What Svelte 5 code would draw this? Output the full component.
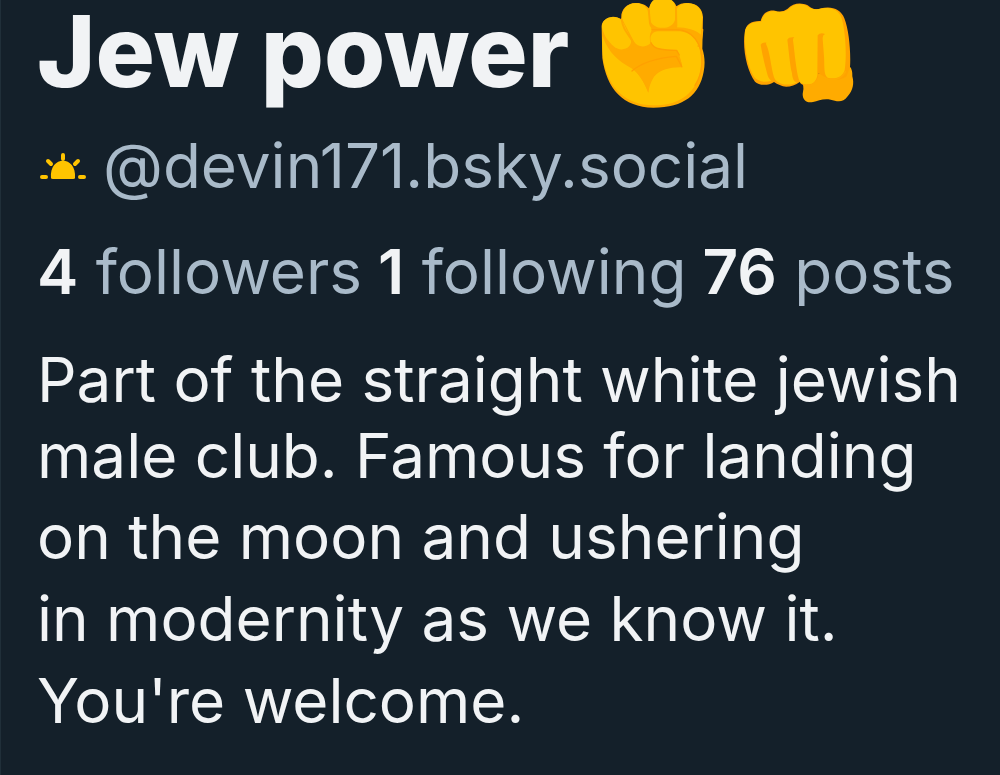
<script>
  const stats = [
    { count: 4, label: 'followers' },
    { count: 1, label: 'following' },
    { count: 76, label: 'posts' }
  ];
  const intro = [
    'Part of the straight white jewish',
    'male club. Famous for landing'
  ];
  const more = [
    'on the moon and ushering',
    'in modernity as we know it.',
    "You're welcome."
  ];
</script>

<main class="profile">
  <h1 class="name">
    <span>Jew power</span>
    <svg class="fist" viewBox="30 0 324 330" role="img" aria-label="Raised fist">
      <path fill="#ffab00" d="M38 84C36 65 50 52 72 50C81 50 90 53 97 58C94 30 112 10 139 9C157 8 171 15 180 25C184 6 199-6 222-6C243-6 258 5 262 19C271 11 284 8 298 9C325 11 341 27 342 51L340 146C347 167 349 190 344 215C332 282 286 323 193 323C102 322 53 267 40 174Z" />
      <path fill="#ffc400" d="M40 108C55 133 70 157 91 175C105 188 119 194 130 204C149 222 165 245 178 278C177 234 211 199 280 202C278 184 270 162 263 152C244 151 224 149 207 145C178 137 176 96 207 94L265 94C307 94 334 124 336 176C340 249 297 306 224 314C120 328 60 271 44 184C39 159 40 132 40 108Z" />
      <rect fill="#ffc400" x="182" y="-7" width="77" height="90" rx="32" />
      <path fill="#ffc400" d="M99 56C99 28 114 11 140 10C167 9 181 29 183 56L188 91C181 103 181 118 185 129C172 143 147 143 136 127Z" />
      <path fill="#ffc400" d="M39 82C38 64 52 51 73 51C94 51 103 64 110 84L124 112C137 143 96 160 74 139C58 124 46 111 39 82ZM264 26C270 15 281 10 298 10C326 12 339 29 340 53L336 104C320 91 294 82 263 82Z" />
      <path fill="none" stroke="#ffab00" stroke-width="6" stroke-linecap="round" stroke-linejoin="round" d="M261 22L262 78Q261 87 249 88H205C190 88 185 80 183 69L179 29M98 58C101 82 110 93 124 113L137 134C151 149 177 146 190 137M328 138Q338 125 340 89" />
      <path fill="#ffab00" d="M42 112C64 143 96 162 128 147L139 136C155 149 172 147 190 137C208 150 237 151 264 151C270 166 276 181 280 203C272 199 269 190 257 188C215 193 185 231 178 278C164 241 147 217 126 204C88 184 59 158 42 112Z" />
      <path fill="none" stroke="#ffa000" stroke-width="4" stroke-linecap="round" stroke-linejoin="round" d="M129 213C162 184 211 173 262 169L278 199M186 128C194 148 223 151 263 151L271 165M189 89H257C310 86 342 132 339 191C337 220 329 239 318 256" />
    </svg>
    <svg class="punch" viewBox="20 0 345 315" role="img" aria-label="Oncoming fist">
      <path fill="#ffab00" d="M206 230L347 200Q355 210 354 229C360 250 356 272 340 289C324 311 306 303 289 299C267 294 252 303 236 306C216 310 205 300 205 282Q209 267 206 248Z" />
      <path fill="#ffa300" d="M31 98C34 72 52 62 79 63C85 39 101 29 122 32Q142 39 159 27C177 7 202 7 220 16C234 27 243 31 260 25C291 17 320 27 330 55C344 90 350 157 347 202L336 230Q302 248 276 234L253 220L249 244Q234 258 216 257C206 257 199 252 196 246C179 260 151 264 138 256Q126 252 119 246C102 258 73 257 62 245C38 213 24 148 31 98Z" />
      <path fill="#ffc400" d="M32 98C34 74 53 64 81 65C86 42 102 31 123 34Q143 40 161 29C178 10 199 10 216 17C234 30 249 30 266 25C292 21 314 31 322 55C333 92 338 167 331 210C325 232 304 239 280 233C267 226 271 193 269 169L265 116Q264 105 272 102Q258 96 250 106L249 226C246 244 235 254 221 253C205 254 199 250 194 240C185 211 181 158 176 121Q176 113 180 112Q163 110 159 119C164 158 167 197 173 220C174 237 180 247 188 247C170 258 137 256 123 239C112 223 109 161 96 134Q94 129 97 128Q84 126 79 134C84 164 90 191 98 219Q102 237 111 242C91 248 74 245 63 235C44 214 28 145 32 98Z" />
      <path fill="none" stroke="#ffab00" stroke-width="5" stroke-linecap="round" d="M270 233C294 245 318 239 333 216M209 255C230 262 244 251 253 234" />
    </svg>
  </h1>

  <p class="handle">
    <svg class="sun" viewBox="0 0 48 28" aria-hidden="true">
      <path fill="#ffc400" d="M12 26C10 3 38 3 36 26Q36 27 34 27H14Q12 27 12 26Z" />
      <path fill="none" stroke="#ffc400" stroke-width="4" stroke-linecap="round" d="M24 3V7M9 9L12 12M39 9L36 12M3 25H7M41 25H45" />
    </svg>
    <span>@devin171.bsky.social</span>
  </p>

  <ul class="stats">
    {#each stats as stat}
      <li><strong>{stat.count}</strong> {stat.label}</li>
    {/each}
  </ul>

  <div class="bio">
    <p class="intro">
      {#each intro as line}
        <span>{line}</span>
      {/each}
    </p>
    <p class="more">
      {#each more as line}
        <span>{line}</span>
      {/each}
    </p>
  </div>
</main>

<style>
  :global(body) {
    margin: 0;
    background: #14202a;
  }
  .profile {
    box-sizing: border-box;
    min-height: 100vh;
    padding: 0 36px;
    border-left: 1px solid #202f39;
    color: #f1f3f5;
    font-family: Inter, sans-serif;
    font-size: 62px;
  }
  h1, p, ul {
    margin: 0;
    padding: 0;
  }
  .name {
    display: flex;
    align-items: flex-start;
    font-size: 99px;
    line-height: 102px;
    font-weight: 800;
    white-space: nowrap;
  }
  svg {
    flex: none;
    display: block;
  }
  .fist {
    width: 108px;
    height: 110px;
    margin-left: 30px;
  }
  .punch {
    width: 115px;
    height: 105px;
    margin-left: 34px;
  }
  .handle {
    display: flex;
    align-items: center;
    gap: 16px;
    margin-top: 16px;
    line-height: 80px;
    color: #a9bac9;
    white-space: nowrap;
  }
  .sun {
    width: 48px;
    height: 28px;
    margin-left: 2px;
  }
  .stats {
    display: flex;
    gap: 16px;
    margin-top: 26px;
    line-height: 80px;
    color: #a9bac9;
    list-style: none;
    white-space: nowrap;
  }
  .stats strong {
    color: #f1f3f5;
    font-weight: 600;
  }
  .bio {
    display: grid;
    gap: 2px;
    margin-top: 30px;
  }
  .bio span {
    display: block;
  }
  .intro {
    line-height: 76px;
  }
  .more {
    line-height: 82px;
  }
</style>
